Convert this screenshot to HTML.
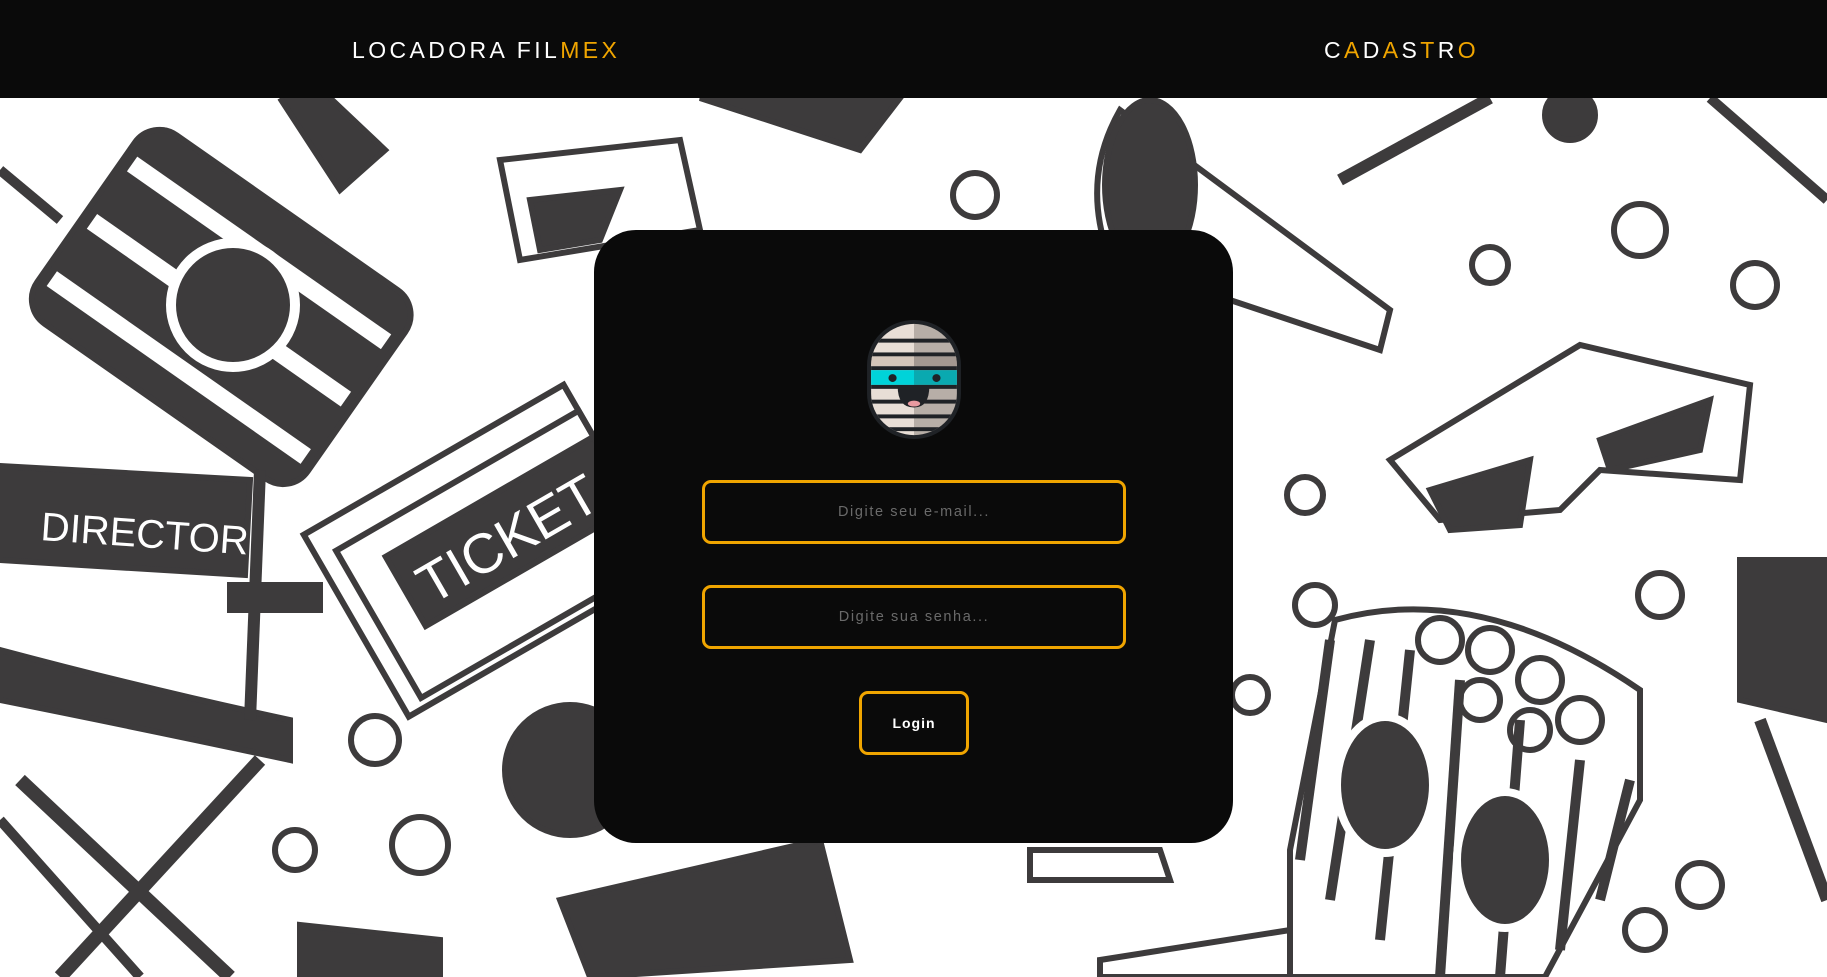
<!DOCTYPE html>
<html><head><meta charset="utf-8"><style>
*{margin:0;padding:0;box-sizing:border-box}
body{width:1827px;height:977px;overflow:hidden;background:#fff;font-family:"Liberation Sans",sans-serif;position:relative}
header{position:absolute;left:0;top:0;width:1827px;height:98px;background:#0a0a0a;z-index:3}
.t{position:absolute;top:36px;font-size:23px;letter-spacing:3.4px;color:#fff;line-height:28px}
.o{color:#f0a500}
#bg{position:absolute;left:0;top:98px;z-index:1}
.card{position:absolute;left:594px;top:230px;width:639px;height:613px;background:#0a0a0a;border-radius:42px;z-index:2}
.in{position:absolute;left:108px;width:424px;height:64px;border:3px solid #f0a500;border-radius:9px;color:#6a6a6a;font-size:14.5px;letter-spacing:1.6px;text-align:center;line-height:58px}
.btn{position:absolute;left:265px;top:461px;width:110px;height:64px;border:3px solid #f0a500;border-radius:9px;color:#fff;font-size:14px;font-weight:bold;letter-spacing:1px;text-align:center;line-height:58px}
</style></head><body>
<header>
<div class="t" style="left:352px">LOCADORA FIL<span class="o">MEX</span></div>
<div class="t" style="left:1324px">C<span class="o">A</span>D<span class="o">A</span>S<span class="o">T</span>R<span class="o">O</span></div>
</header>
<svg id="bg" width="1827" height="879" viewBox="0 98 1827 879" fill="none" stroke="#3d3b3c" stroke-width="6">
<g transform="rotate(35 220 300)"><rect x="60" y="190" width="330" height="230" rx="30" fill="#3d3b3c"/><rect x="70" y="230" width="310" height="18" fill="#fff" stroke="none"/><rect x="70" y="300" width="310" height="18" fill="#fff" stroke="none"/><rect x="70" y="370" width="310" height="18" fill="#fff" stroke="none"/></g>
<circle cx="233" cy="305" r="62" fill="#3d3b3c" stroke="#fff" stroke-width="10"/>
<line x1="0" y1="170" x2="60" y2="220" stroke-width="10"/>
<path d="M280 98 L340 190 L385 150 L330 98" fill="#3d3b3c"/>
<path d="M0 466 L250 480 L245 575 L0 560Z" fill="#3d3b3c"/>
<text x="40" y="540" font-family="Liberation Sans" font-size="40" fill="#fff" stroke="none" transform="rotate(4 40 540)">DIRECTOR</text>
<path d="M0 650 Q150 690 290 720 L290 760 Q150 730 0 700Z" fill="#3d3b3c"/>
<line x1="260" y1="470" x2="250" y2="720" stroke-width="12"/>
<line x1="20" y1="780" x2="230" y2="977" stroke-width="14"/>
<line x1="260" y1="760" x2="60" y2="977" stroke-width="14"/>
<line x1="0" y1="820" x2="140" y2="977" stroke-width="10"/>
<rect x="230" y="585" width="90" height="25" fill="#3d3b3c"/>
<g transform="rotate(-30 480 560)"><rect x="340" y="450" width="300" height="210" fill="#fff"/><rect x="400" y="510" width="240" height="80" fill="#3d3b3c"/><text x="415" y="575" font-size="56" fill="#fff" stroke="none" font-family="Liberation Sans">TICKET</text><rect x="360" y="480" width="280" height="170"/></g>
<path d="M500 160 L680 140 L700 230 L520 260Z" fill="#fff"/><path d="M530 200 L620 190 L600 240 L540 250Z" fill="#3d3b3c"/>
<path d="M700 98 L900 98 L860 150 Z" fill="#3d3b3c"/>
<path d="M1120 110 L1390 310 L1380 350 L1110 260 Q1080 180 1120 110Z" fill="#fff"/>
<ellipse cx="1150" cy="185" rx="45" ry="85" fill="#3d3b3c"/>
<line x1="1340" y1="180" x2="1490" y2="98" stroke-width="12"/>
<circle cx="1570" cy="115" r="25" fill="#3d3b3c"/>
<line x1="1710" y1="98" x2="1827" y2="200" stroke-width="10"/>
<path d="M1390 460 L1580 345 L1750 385 L1740 480 L1600 470 L1560 510 L1440 520Z" fill="#fff"/>
<path d="M1430 490 L1530 460 L1520 525 L1450 530Z" fill="#3d3b3c"/>
<path d="M1600 440 L1710 400 L1700 450 L1610 470Z" fill="#3d3b3c"/>
<path d="M1740 560 L1827 560 L1827 720 L1740 700Z" fill="#3d3b3c"/>
<line x1="1760" y1="720" x2="1827" y2="900" stroke-width="12"/>
<g><path d="M1335 620 Q1480 580 1640 690 L1640 800 L1545 977 L1290 977 L1290 850Z" fill="#fff"/>
<path d="M1330 640 L1300 860" stroke-width="10"/><path d="M1370 640 L1330 900" stroke-width="10"/><path d="M1410 650 L1380 940" stroke-width="10"/><path d="M1460 680 L1440 977" stroke-width="10"/><path d="M1520 720 L1500 977" stroke-width="10"/><path d="M1580 760 L1560 950" stroke-width="10"/><path d="M1630 780 L1600 900" stroke-width="10"/>
<ellipse cx="1385" cy="785" rx="48" ry="68" fill="#3d3b3c" stroke="#fff" stroke-width="8"/>
<ellipse cx="1505" cy="860" rx="48" ry="68" fill="#3d3b3c" stroke="#fff" stroke-width="8"/>
<circle cx="1440" cy="640" r="22"/><circle cx="1490" cy="650" r="22"/><circle cx="1540" cy="680" r="22"/><circle cx="1580" cy="720" r="22"/><circle cx="1480" cy="700" r="20"/><circle cx="1530" cy="730" r="20"/></g>
<circle cx="975" cy="195" r="22"/><circle cx="1640" cy="230" r="26"/><circle cx="1490" cy="265" r="18"/><circle cx="1755" cy="285" r="22"/><circle cx="1305" cy="495" r="18"/><circle cx="1660" cy="595" r="22"/><circle cx="1315" cy="605" r="20"/><circle cx="375" cy="740" r="24"/><circle cx="295" cy="850" r="20"/><circle cx="420" cy="845" r="28"/><circle cx="1700" cy="885" r="22"/><circle cx="1645" cy="930" r="20"/><circle cx="1250" cy="695" r="18"/>
<circle cx="570" cy="770" r="65" fill="#3d3b3c"/>
<path d="M560 900 L820 840 L850 960 L590 977Z" fill="#3d3b3c"/>
<path d="M300 925 L440 940 L440 977 L300 977Z" fill="#3d3b3c"/>
<path d="M1100 960 L1290 930 L1290 977 L1100 977Z"/>
<path d="M1030 850 L1160 850 L1170 880 L1030 880Z"/>
</svg>
<div class="card">
<svg style="position:absolute;left:272px;top:89px" width="96" height="121" viewBox="0 0 94 123" preserveAspectRatio="none">
<defs><clipPath id="c"><rect x="5" y="5" width="84" height="113" rx="42" ry="42"/></clipPath></defs>
<rect x="1" y="1" width="92" height="121" rx="46" fill="#1f2226"/>
<g clip-path="url(#c)">
<rect x="0" y="0" width="47" height="123" fill="#e8ded6"/><rect x="47" y="0" width="47" height="123" fill="#b7aea7"/>
<rect x="0" y="20" width="94" height="4" fill="#1f2226"/><rect x="0" y="34" width="94" height="4" fill="#1f2226"/>
<rect x="0" y="38" width="47" height="10" fill="#d4c6ba"/><rect x="47" y="38" width="47" height="10" fill="#a39891"/>
<rect x="0" y="48" width="94" height="4" fill="#1f2226"/>
<rect x="0" y="52" width="47" height="15" fill="#00d3d9"/><rect x="47" y="52" width="47" height="15" fill="#0aa9b0"/>
<rect x="0" y="67" width="94" height="4" fill="#1f2226"/>
<rect x="0" y="82" width="94" height="4" fill="#1f2226"/><rect x="0" y="97" width="94" height="4" fill="#1f2226"/><rect x="0" y="110" width="94" height="4" fill="#1f2226"/>
</g>
<circle cx="26" cy="60" r="4" fill="#1f2226"/><circle cx="69" cy="60" r="4" fill="#1f2226"/>
<path d="M31 68 L62 68 Q62 90 47 90 Q31 90 31 68Z" fill="#1f2226"/>
<ellipse cx="47" cy="86" rx="6" ry="3" fill="#e89aa0"/>
</svg>
<div class="in" style="top:250px">Digite seu e-mail...</div>
<div class="in" style="top:355px">Digite sua senha...</div>
<div class="btn">Login</div>
</div>
</body></html>
